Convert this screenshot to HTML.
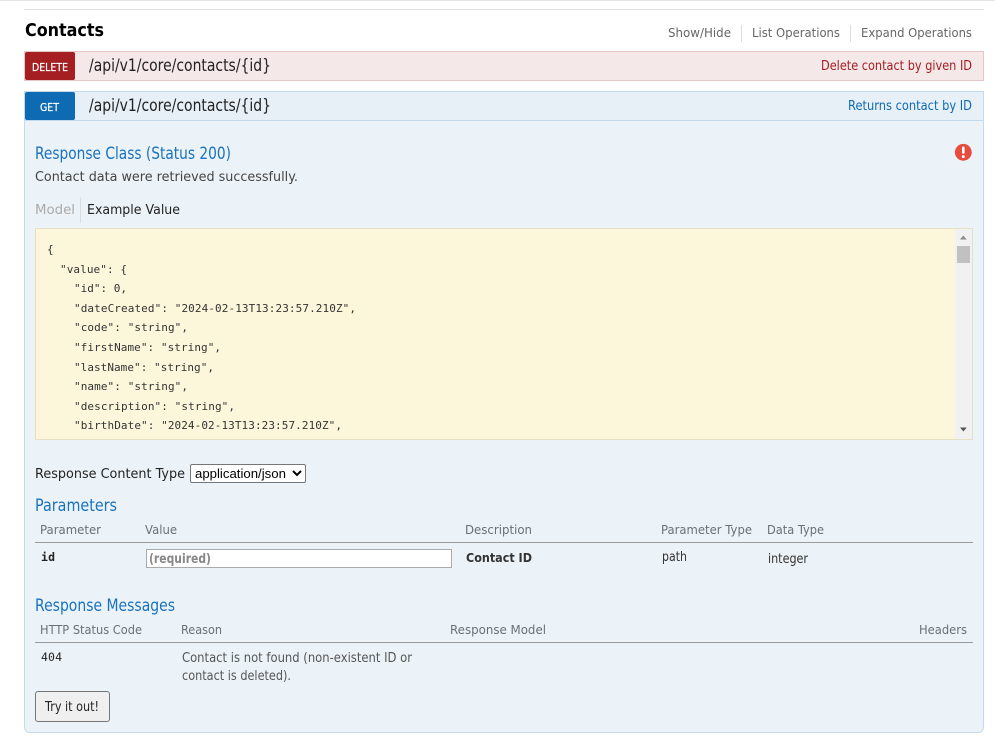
<!DOCTYPE html>
<html lang="en">
<head>
<meta charset="utf-8">
<title>Contacts</title>
<style>
html,body{margin:0;padding:0;width:995px;height:743px;overflow:hidden;background:#fff}
.b{position:absolute;box-sizing:border-box}
svg{position:absolute;left:0;top:0}
text{font-family:"DejaVu Sans","Liberation Sans",sans-serif;font-size:13px;white-space:pre}
.m{font-family:"DejaVu Sans Mono","Liberation Mono",monospace;font-size:11px;fill:#333}
.h{font-size:12.5px;fill:#6b7075}
.t{font-size:16.5px;fill:#1a72bd}
.p{font-size:16.5px;fill:#222}
</style>
</head>
<body>
<div class="b" style="left:0;top:0;width:995px;height:1px;background:#e4e6e8"></div>
<div class="b" style="left:24px;top:9px;width:960px;height:1px;background:#dfe2e5"></div>
<div class="b" style="left:741px;top:25px;width:1px;height:17px;background:#ddd"></div>
<div class="b" style="left:850px;top:25px;width:1px;height:17px;background:#ddd"></div>

<div class="b" style="left:24px;top:51px;width:960px;height:30px;background:#f5e8e8;border:1px solid #e8c6c7"></div>
<div class="b" style="left:25px;top:52px;width:50px;height:28px;background:#a41e22;border-radius:2px"></div>

<div class="b" style="left:24px;top:121px;width:960px;height:612px;background:#ebf3f9;border:1px solid #c3d9ec;border-top:0;border-radius:0 0 6px 6px"></div>
<div class="b" style="left:24px;top:91px;width:960px;height:30px;background:#e7f0f7;border:1px solid #c3d9ec"></div>
<div class="b" style="left:25px;top:92px;width:50px;height:28px;background:#0f6ab4;border-radius:2px"></div>

<div class="b" style="left:80px;top:197px;width:1px;height:26px;background:#ddd"></div>

<div class="b" style="left:35px;top:228px;width:938px;height:212px;background:#fcf6db;border:1px solid #e5e0c6"></div>
<div class="b" style="left:955px;top:229px;width:17px;height:210px;background:#f1f1f1"></div>
<div class="b" style="left:957px;top:246px;width:13px;height:17px;background:#c1c1c1"></div>

<select class="b" style="left:190px;top:464px;width:116px;height:19px;font:13.2px 'Liberation Sans',sans-serif;background:#fff;color:#000;border:1px solid #767676;border-radius:2px;padding:0"><option>application/json</option></select>

<div class="b" style="left:35px;top:542px;width:938px;height:1px;background:#999"></div>
<input class="b" type="text" style="left:146px;top:549px;width:306px;height:19px;background:#fff;border:1px solid #aaa;padding:0;margin:0">

<div class="b" style="left:35px;top:642px;width:938px;height:1px;background:#999"></div>
<div class="b" style="left:35px;top:691px;width:75px;height:31px;background:#efefef;border:1px solid #767676;border-radius:3px"></div>

<svg width="995" height="743" viewBox="0 0 995 743" xmlns="http://www.w3.org/2000/svg">
<text x="25" y="36" textLength="79" lengthAdjust="spacingAndGlyphs" style="font-size:18px;font-weight:bold;fill:#000">Contacts</text>
<text x="668" y="37" textLength="63" lengthAdjust="spacingAndGlyphs" style="font-size:12.5px;fill:#666">Show/Hide</text>
<text x="752" y="37" textLength="88" lengthAdjust="spacingAndGlyphs" style="font-size:12.5px;fill:#666">List Operations</text>
<text x="861" y="37" textLength="111" lengthAdjust="spacingAndGlyphs" style="font-size:12.5px;fill:#666">Expand Operations</text>

<text x="32" y="71" textLength="36" lengthAdjust="spacingAndGlyphs" style="font-size:11px;fill:#fff;stroke:#fff;stroke-width:.25">DELETE</text>
<text class="p" x="89" y="71" textLength="182" lengthAdjust="spacingAndGlyphs">/api/v1/core/contacts/{id}</text>
<text x="821" y="70" textLength="151" lengthAdjust="spacingAndGlyphs" style="fill:#a41e22">Delete contact by given ID</text>

<text x="40" y="111" textLength="19" lengthAdjust="spacingAndGlyphs" style="font-size:11px;fill:#fff;stroke:#fff;stroke-width:.25">GET</text>
<text class="p" x="89" y="111" textLength="182" lengthAdjust="spacingAndGlyphs">/api/v1/core/contacts/{id}</text>
<text x="848" y="110" textLength="124" lengthAdjust="spacingAndGlyphs" style="fill:#0f6ab4">Returns contact by ID</text>

<text class="t" x="35" y="159" textLength="196" lengthAdjust="spacingAndGlyphs">Response Class (Status 200)</text>
<circle cx="963.3" cy="152.3" r="8.4" fill="#e74c3c"/>
<rect x="962" y="146.5" width="2.6" height="7.2" rx="1" fill="#fff"/>
<circle cx="963.3" cy="156.6" r="1.5" fill="#fff"/>
<text x="35" y="181" textLength="263" lengthAdjust="spacingAndGlyphs" style="fill:#444">Contact data were retrieved successfully.</text>
<text x="35" y="214" textLength="40" lengthAdjust="spacingAndGlyphs" style="fill:#aaa">Model</text>
<text x="87" y="214" textLength="93" lengthAdjust="spacingAndGlyphs" style="fill:#222">Example Value</text>

<text class="m" x="47" y="253">{</text>
<text class="m" x="60" y="273" textLength="67">"value": {</text>
<text class="m" x="74" y="292" textLength="53">"id": 0,</text>
<text class="m" x="74" y="312" textLength="282">"dateCreated": "2024-02-13T13:23:57.210Z",</text>
<text class="m" x="74" y="331" textLength="114">"code": "string",</text>
<text class="m" x="74" y="351" textLength="147">"firstName": "string",</text>
<text class="m" x="74" y="371" textLength="140">"lastName": "string",</text>
<text class="m" x="74" y="390" textLength="114">"name": "string",</text>
<text class="m" x="74" y="410" textLength="161">"description": "string",</text>
<text class="m" x="74" y="429" textLength="268">"birthDate": "2024-02-13T13:23:57.210Z",</text>
<path d="M963.3 235.5l3.4 4h-6.8z" fill="#8a8a8a"/>
<path d="M960 427.5h6.8l-3.4 4z" fill="#555"/>

<text x="35" y="478" textLength="150" lengthAdjust="spacingAndGlyphs" style="fill:#222">Response Content Type</text>

<text class="t" x="35" y="511" textLength="82" lengthAdjust="spacingAndGlyphs">Parameters</text>
<text class="h" x="40" y="534" textLength="61" lengthAdjust="spacingAndGlyphs">Parameter</text>
<text class="h" x="145" y="534" textLength="32" lengthAdjust="spacingAndGlyphs">Value</text>
<text class="h" x="465" y="534" textLength="67" lengthAdjust="spacingAndGlyphs">Description</text>
<text class="h" x="661" y="534" textLength="91" lengthAdjust="spacingAndGlyphs">Parameter Type</text>
<text class="h" x="767" y="534" textLength="57" lengthAdjust="spacingAndGlyphs">Data Type</text>

<text x="41" y="561" textLength="14" style="font-family:'DejaVu Sans Mono',monospace;font-size:11.5px;font-weight:bold;fill:#222">id</text>
<text x="149" y="563" textLength="62" lengthAdjust="spacingAndGlyphs" style="font-weight:bold;fill:#888">(required)</text>
<text x="466" y="562" textLength="66" lengthAdjust="spacingAndGlyphs" style="font-size:12.5px;font-weight:bold;fill:#333">Contact ID</text>
<text x="662" y="561" textLength="25" lengthAdjust="spacingAndGlyphs" style="fill:#333">path</text>
<text x="768" y="563" textLength="40" lengthAdjust="spacingAndGlyphs" style="fill:#333">integer</text>

<text class="t" x="35" y="611" textLength="140" lengthAdjust="spacingAndGlyphs">Response Messages</text>
<text class="h" x="40" y="634" textLength="102" lengthAdjust="spacingAndGlyphs">HTTP Status Code</text>
<text class="h" x="181" y="634" textLength="41" lengthAdjust="spacingAndGlyphs">Reason</text>
<text class="h" x="450" y="634" textLength="96" lengthAdjust="spacingAndGlyphs">Response Model</text>
<text class="h" x="919" y="634" textLength="48" lengthAdjust="spacingAndGlyphs">Headers</text>

<text x="41" y="661" textLength="21" style="font-family:'DejaVu Sans Mono',monospace;font-size:11.5px;fill:#222">404</text>
<text x="182" y="662" textLength="230" lengthAdjust="spacingAndGlyphs" style="fill:#555">Contact is not found (non-existent ID or</text>
<text x="182" y="680" textLength="109" lengthAdjust="spacingAndGlyphs" style="fill:#555">contact is deleted).</text>
<text x="45" y="711" textLength="54" lengthAdjust="spacingAndGlyphs" style="fill:#222">Try it out!</text>
</svg>
</body>
</html>
